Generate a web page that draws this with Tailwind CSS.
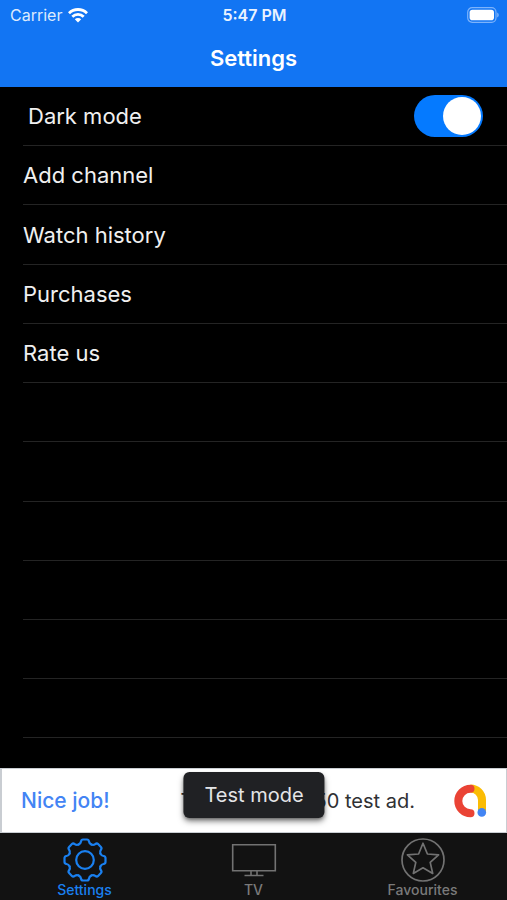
<!DOCTYPE html>
<html lang="en">
<head>
<meta charset="utf-8">
<meta name="viewport" content="width=device-width, initial-scale=1">
<title>Settings</title>
<script src="https://cdn.jsdelivr.net/npm/@tailwindcss/browser@4"></script>
</head>
<body class="flex h-screen flex-col bg-black font-[Inter,'Liberation_Sans',sans-serif] text-[#f0f0f0]">
  <header class="h-[87px] shrink-0 bg-[#1275f3] text-white">
    <div class="grid h-[30px] grid-cols-3 items-center pr-2 pl-[10px] text-base leading-5">
      <div class="flex items-center gap-[6px] text-[#dceafd]">
        <span>Carrier</span>
        <svg class="h-4 w-5" viewBox="0 0 20 16" fill="none" stroke="#fff" stroke-width="2.8" aria-label="Wi-Fi">
          <path d="M1 6.2a12.8 12.8 0 0 1 18 0"/>
          <path d="M4.3 9.7a8.1 8.1 0 0 1 11.4 0"/>
          <path d="M10 15.6l-3.2-3.3a4.6 4.6 0 0 1 6.4 0z" fill="#fff" stroke="none"/>
        </svg>
      </div>
      <div class="text-center font-semibold whitespace-nowrap text-[#eaf3ff]">5:47 PM</div>
      <svg class="h-4 w-[33px] justify-self-end" viewBox="0 0 33 16" aria-label="Battery full">
        <rect x="1.7" y="0.7" width="28.3" height="14.6" rx="4.5" fill="none" stroke="#7db3fb" stroke-width="1.2"/>
        <rect x="3.6" y="2.8" width="24.4" height="10.4" rx="2.8" fill="#fff"/>
        <path d="M31.2 5.6q1.6.8 1.6 2.4t-1.6 2.4z" fill="#7db3fb"/>
      </svg>
    </div>
    <h1 class="pt-[14px] text-center text-[22px] leading-7 font-semibold">Settings</h1>
  </header>

  <main class="min-h-0 flex-1">
    <ul class="grid h-full grid-rows-[repeat(11,2fr)_1fr] pl-[23px] text-[22px] leading-7">
      <li class="flex items-center justify-between border-b border-[#242424] pr-6 pl-[5px]">
        <label for="dark">Dark mode</label>
        <input id="dark" type="checkbox" role="switch" checked class="h-[42px] w-[69px] appearance-none rounded-full bg-[#3a3a3c] p-[2px] before:block before:size-[38px] before:rounded-full before:bg-white checked:bg-[#057aff] checked:before:ml-[27px]">
      </li>
      <li class="flex border-b border-[#242424]"><button class="flex-1 text-left">Add channel</button></li>
      <li class="flex border-b border-[#242424]"><button class="flex-1 text-left">Watch history</button></li>
      <li class="flex border-b border-[#242424]"><button class="flex-1 text-left">Purchases</button></li>
      <li class="flex border-b border-[#242424]"><button class="flex-1 text-left">Rate us</button></li>
      <li class="border-b border-[#242424]"></li>
      <li class="border-b border-[#242424]"></li>
      <li class="border-b border-[#242424]"></li>
      <li class="border-b border-[#242424]"></li>
      <li class="border-b border-[#242424]"></li>
      <li class="border-b border-[#242424]"></li>
    </ul>
  </main>

  <a href="#" class="relative flex h-[65px] shrink-0 items-center border border-l-2 border-[#c9cdd2] bg-white pr-[19px] pl-[19px] text-xl leading-6 text-[#303134]">
    <span class="text-[21px] font-medium text-[#4384f4]">Nice job!</span>
    <span class="ml-auto whitespace-nowrap">This is a 320x50 test ad.</span>
    <svg class="ml-[38px] size-[34px]" viewBox="0 0 34 34" fill="none" stroke-width="8" aria-label="AdMob">
      <path d="M17.5 4.5A11.5 11.5 0 0 1 29 16v12" stroke="#fbbc04"/>
      <path d="M17.5 4.8a12.2 12.2 0 0 0 0 24.4" stroke="#ea4335" stroke-linecap="round"/>
      <circle cx="28.8" cy="28.4" r="4.3" fill="#4285f4"/>
    </svg>
    <span class="absolute top-[3px] left-1/2 -translate-x-1/2 rounded-md bg-[#202124] px-[21px] py-[11px] whitespace-nowrap text-[#e4e5e7] shadow-md shadow-black/50">Test mode</span>
  </a>

  <nav class="grid h-[67px] shrink-0 grid-cols-3 bg-[#121212] text-sm leading-[14px] font-medium text-[#7a7a7a]">
    <a href="#" aria-current="page" class="flex flex-col items-center pt-1 text-[#1a80f0]">
      <svg class="size-[46px]" viewBox="-23 -23 46 46" fill="none" stroke="currentColor" stroke-width="2.2" stroke-linecap="round" aria-hidden="true">
        <defs><path id="tooth" d="M-6.4-15.4Q-4.3-16.4-4-18.5Q-3.7-20.5-2-20.5H2Q3.7-20.5 4-18.5Q4.3-16.4 6.4-15.4"/></defs>
        <use href="#tooth"/>
        <use href="#tooth" transform="rotate(45)"/>
        <use href="#tooth" transform="rotate(90)"/>
        <use href="#tooth" transform="rotate(135)"/>
        <use href="#tooth" transform="rotate(180)"/>
        <use href="#tooth" transform="rotate(225)"/>
        <use href="#tooth" transform="rotate(270)"/>
        <use href="#tooth" transform="rotate(315)"/>
        <circle r="8.8"/>
      </svg>
      <span>Settings</span>
    </a>
    <a href="#" class="flex flex-col items-center pt-1">
      <svg class="size-[46px]" viewBox="-23 -23 46 46" fill="none" stroke="#727272" stroke-width="1.6" aria-hidden="true">
        <path d="M-21.3-15.3h42.6V10.7h-42.6zM-3 11v4.5M3 11v4.5M-9.5 15.5h19"/>
      </svg>
      <span>TV</span>
    </a>
    <a href="#" class="flex flex-col items-center pt-1">
      <svg class="size-[46px]" viewBox="-23 -23 46 46" fill="none" stroke="#727272" stroke-width="1.7" stroke-linejoin="round" aria-hidden="true">
        <circle r="21"/>
        <path d="M0-16.8 4.4-6 15.6-5.1 7.2 2.4 9.7 13.4 0 7.8-9.7 13.4-7.2 2.4-15.6-5.1-4.4-6z"/>
      </svg>
      <span>Favourites</span>
    </a>
  </nav>
</body>
</html>
